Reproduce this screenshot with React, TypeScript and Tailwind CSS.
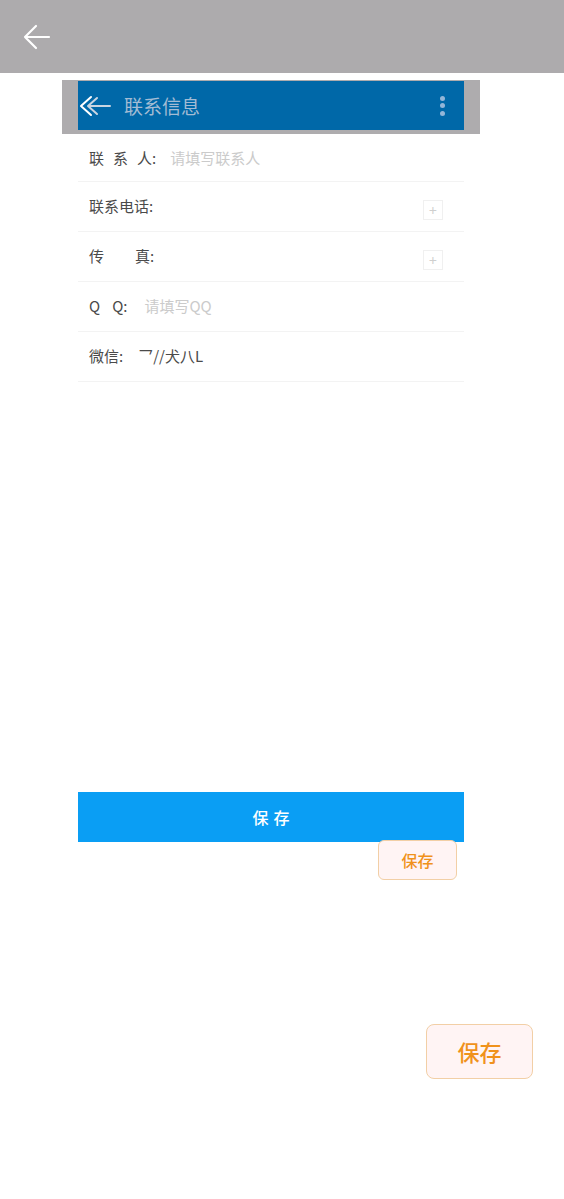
import React from 'react'

const font = { fontFamily: '"Noto Sans CJK SC", "Noto Sans", sans-serif' }

function PlusBox() {
  return (
    <div className="mt-[7px] mr-[21px] flex h-[20px] w-[20px] items-center justify-center border border-[#f0f0f0] text-[14px] leading-none text-[#cfcfcf]">
      +
    </div>
  )
}

function Row({ children, plus, first }: { children: React.ReactNode; plus?: boolean; first?: boolean }) {
  return (
    <div
      className={`flex items-center justify-between border-b border-[#f3f3f3] pl-[11px] ${first ? 'h-[48px] pt-[2px]' : 'h-[50px]'}`}
    >
      <div className="flex items-center text-[15px] text-[#4a4a4a]">{children}</div>
      {plus && <PlusBox />}
    </div>
  )
}

export default function App() {
  return (
    <div className="min-h-[1199px] w-[564px] bg-white" style={font}>
      {/* top bar */}
      <div className="flex h-[73px] items-center bg-[#adabad] pl-[23px]">
        <svg width="28" height="28" viewBox="0 0 28 28" fill="none" stroke="white" strokeWidth="2.2" strokeLinecap="round" strokeLinejoin="round">
          <path d="M26 14H2M13 3L2 14l11 11" />
        </svg>
      </div>

      <div className="ml-[78px] w-[386px]">
        {/* screenshot of header */}
        <div className="-mx-[16px] mt-[7px] h-[54px] bg-[#aeacae] px-[16px] pt-[1px]">
          <div className="flex h-[49px] items-center bg-[#0068a8]">
            <svg width="34" height="22" viewBox="0 0 34 22" fill="none" strokeLinecap="round" strokeLinejoin="round" className="ml-[1px]">
              <path d="M12 2L2 11l10 9" stroke="white" strokeWidth="2" />
              <path d="M31 11H9M18 3l-9 8 9 8" stroke="#c9d6e2" strokeWidth="2" />
            </svg>
            <span className="ml-[11px] text-[19px] leading-none text-[#a3bcd4]">联系信息</span>
            <div className="ml-auto mr-[19px] flex flex-col gap-[2.5px]">
              <span className="h-[5px] w-[5px] rounded-full bg-[#93b6d8]" />
              <span className="h-[5px] w-[5px] rounded-full bg-[#93b6d8]" />
              <span className="h-[5px] w-[5px] rounded-full bg-[#93b6d8]" />
            </div>
          </div>
        </div>

        {/* form */}
        <Row first>
          <span>联</span>
          <span className="ml-[9px]">系</span>
          <span className="ml-[9px]">人</span>
          <span>:</span>
          <span className="ml-[14px] text-[#cbcbcb]">请填写联系人</span>
        </Row>
        <Row plus>
          <span>联系电话:</span>
        </Row>
        <Row plus>
          <span>传</span>
          <span className="ml-[31px]">真</span>
          <span>:</span>
        </Row>
        <Row>
          <span>Q</span>
          <span className="ml-[12px]">Q</span>
          <span>:</span>
          <span className="ml-[17px] text-[#cbcbcb]">请填写QQ</span>
        </Row>
        <Row>
          <span>微信:</span>
          <span className="ml-[15px]">乛//犬八L</span>
        </Row>

        {/* save buttons */}
        <div className="mt-[410px] flex h-[50px] items-center justify-center bg-[#0a9ef4] text-[16px] font-medium text-white">
          <span>保</span>
          <span className="ml-[5px]">存</span>
        </div>
        <div className="flex justify-end pr-[7px]">
          <div className="-mt-[2px] flex h-[40px] w-[79px] items-center justify-center rounded-[6px] border border-[#f2cfa6] bg-[#fff4f4] text-[16px] font-medium text-[#f0921c]">
            保存
          </div>
        </div>
      </div>

      <div className="mt-[144px] flex justify-end pr-[31px]">
        <div className="flex h-[55px] w-[107px] items-center justify-center rounded-[8px] border border-[#f2cfa6] bg-[#fff4f4] text-[22px] font-medium text-[#f0921c]">
          保存
        </div>
      </div>
    </div>
  )
}
